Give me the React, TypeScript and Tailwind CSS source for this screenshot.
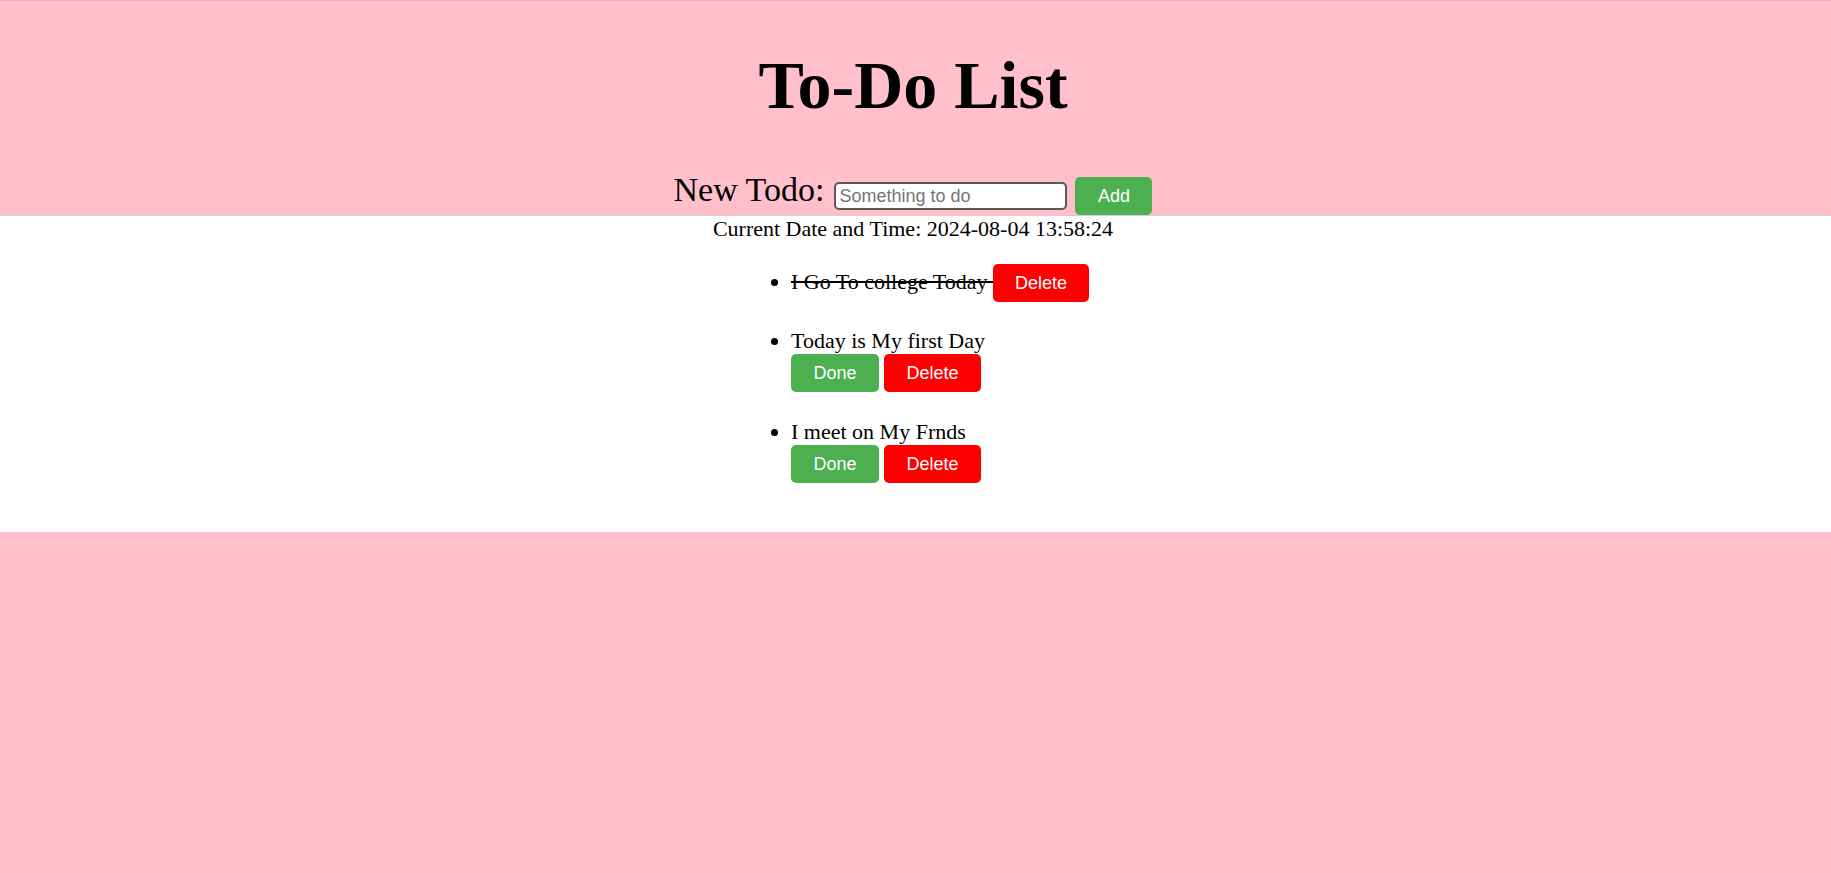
import React from "react";

function Btn({ label, color, w }: { label: string; color: "green" | "red"; w: string }) {
  const cls =
    color === "green"
      ? "bg-[#4caf50]"
      : "bg-[#ff0000]";
  return (
    <button
      type="button"
      className={`${cls} ${w} h-[38px] rounded-[5px] text-[18px] leading-[20px] text-white font-['Liberation_Sans',Arial,sans-serif] flex items-center justify-center shrink-0`}
    >
      {label}
    </button>
  );
}

export default function App() {
  return (
    <div className="min-h-screen bg-[#ffc0cb] font-['Liberation_Serif','Times_New_Roman',serif] text-black">
      <header className="flex h-[216px] flex-col items-center border-t border-b border-t-[#eab0bb] border-b-[#d9cdd0] pr-[5px]">
        <h1 className="mt-[44px] text-[68px] font-bold leading-[80px]">To-Do List</h1>
        <form className="mt-[52px] flex h-[38px] items-center" onSubmit={(e) => e.preventDefault()}>
          <label className="self-start text-[34px] leading-[26px]">New Todo:</label>
          <input
            type="text"
            placeholder="Something to do"
            className="ml-[10px] h-[28px] w-[233px] rounded-[5px] border-2 border-[#5a5a5a] bg-white px-[3px] text-[18px] font-['Liberation_Sans',Arial,sans-serif] placeholder:text-[#757575] outline-none"
          />
          <div className="ml-[8px]">
            <Btn label="Add" color="green" w="w-[77px]" />
          </div>
        </form>
      </header>
      <main className="flex h-[316px] flex-col items-center bg-white pr-[5px]">
        <p className="text-[22px] leading-[25px]">Current Date and Time: 2024-08-04 13:58:24</p>
        <div className="mx-auto w-[344px] pl-[50px]">
          <ul className="list-disc text-[22px] leading-[25px]">
            <li className="mt-[23px]">
              <div className="flex items-baseline">
                <span className="line-through whitespace-pre">I Go To college Today </span>
                <Btn label="Delete" color="red" w="w-[96px]" />
              </div>
            </li>
            <li className="mt-[26px]">
              <div>Today is My first Day</div>
              <div className="mt-px flex gap-[5px]">
                <Btn label="Done" color="green" w="w-[88px]" />
                <Btn label="Delete" color="red" w="w-[97px]" />
              </div>
            </li>
            <li className="mt-[27px]">
              <div>I meet on My Frnds</div>
              <div className="mt-px flex gap-[5px]">
                <Btn label="Done" color="green" w="w-[88px]" />
                <Btn label="Delete" color="red" w="w-[97px]" />
              </div>
            </li>
          </ul>
        </div>
      </main>
    </div>
  );
}
